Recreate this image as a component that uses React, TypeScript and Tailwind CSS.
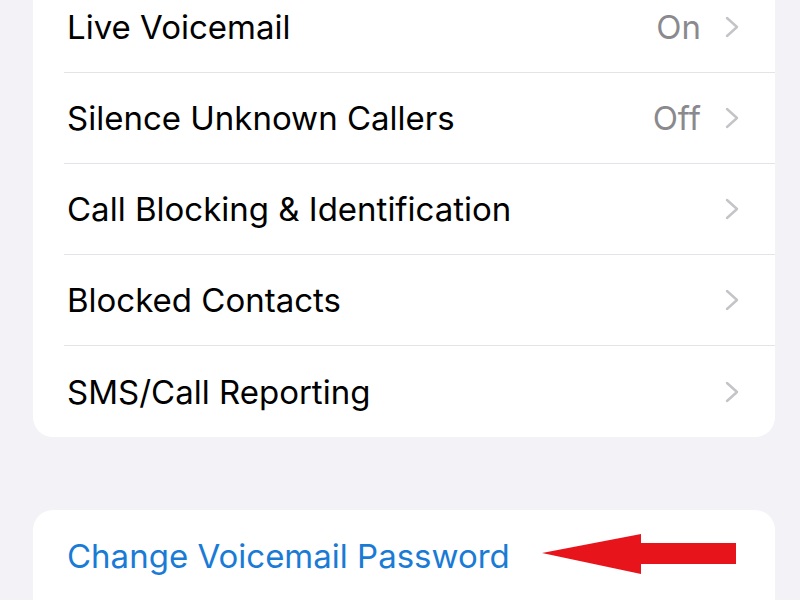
import React from 'react';

type Row = { label: string; value?: string };

const rows: Row[] = [
    { label: 'Live Voicemail', value: 'On' },
    { label: 'Silence Unknown Callers', value: 'Off' },
    { label: 'Call Blocking & Identification' },
    { label: 'Blocked Contacts' },
    { label: 'SMS/Call Reporting' },
];

const Chevron: React.FC = () => (
    <svg width="14" height="22" viewBox="0 0 14 22" fill="none">
        <polyline points="2,2 12,11 2,20" stroke="#c4c4c8" strokeWidth="2.4" strokeLinecap="round" strokeLinejoin="round" />
    </svg>
);

const RedArrow: React.FC = () => (
    <svg width="196" height="42" viewBox="0 0 196 42">
        <polygon points="0,19 99,0 99,9 194,9 194,30 99,30 99,40" fill="#e8141c" />
    </svg>
);

export default function App() {
    return (
        <div
            className="w-[800px] h-[600px] overflow-hidden bg-[#f2f2f7] px-[33px] pr-[25px]"
            style={{ fontFamily: 'Inter, "Noto Sans", sans-serif' }}
        >
            <div className="-mt-[18px] bg-white rounded-[20px] flex flex-col">
                {rows.map((row, i) => (
                    <div key={row.label} className="pl-[31px] h-[91px] flex">
                        <div
                            className={`flex-1 flex items-center pr-[36px] ${
                                i < rows.length - 1 ? 'border-b border-[#e3e3e8]' : ''
                            }`}
                        >
                            <span className="flex-1 text-[33px] text-black pl-[3px] pt-[2px]">{row.label}</span>
                            {row.value && (
                                <span className="text-[33px] text-[#8a8a8e] mr-[24px] pt-[2px]">{row.value}</span>
                            )}
                            <Chevron />
                        </div>
                    </div>
                ))}
            </div>

            <div className="mt-[73px] bg-white rounded-[20px] h-[120px] flex items-start pt-[22px] pl-[34px]">
                <span className="text-[33px] text-[#1a7bd6]">Change Voicemail Password</span>
                <div className="ml-[32px] mt-[2px]">
                    <RedArrow />
                </div>
            </div>
        </div>
    );
}
